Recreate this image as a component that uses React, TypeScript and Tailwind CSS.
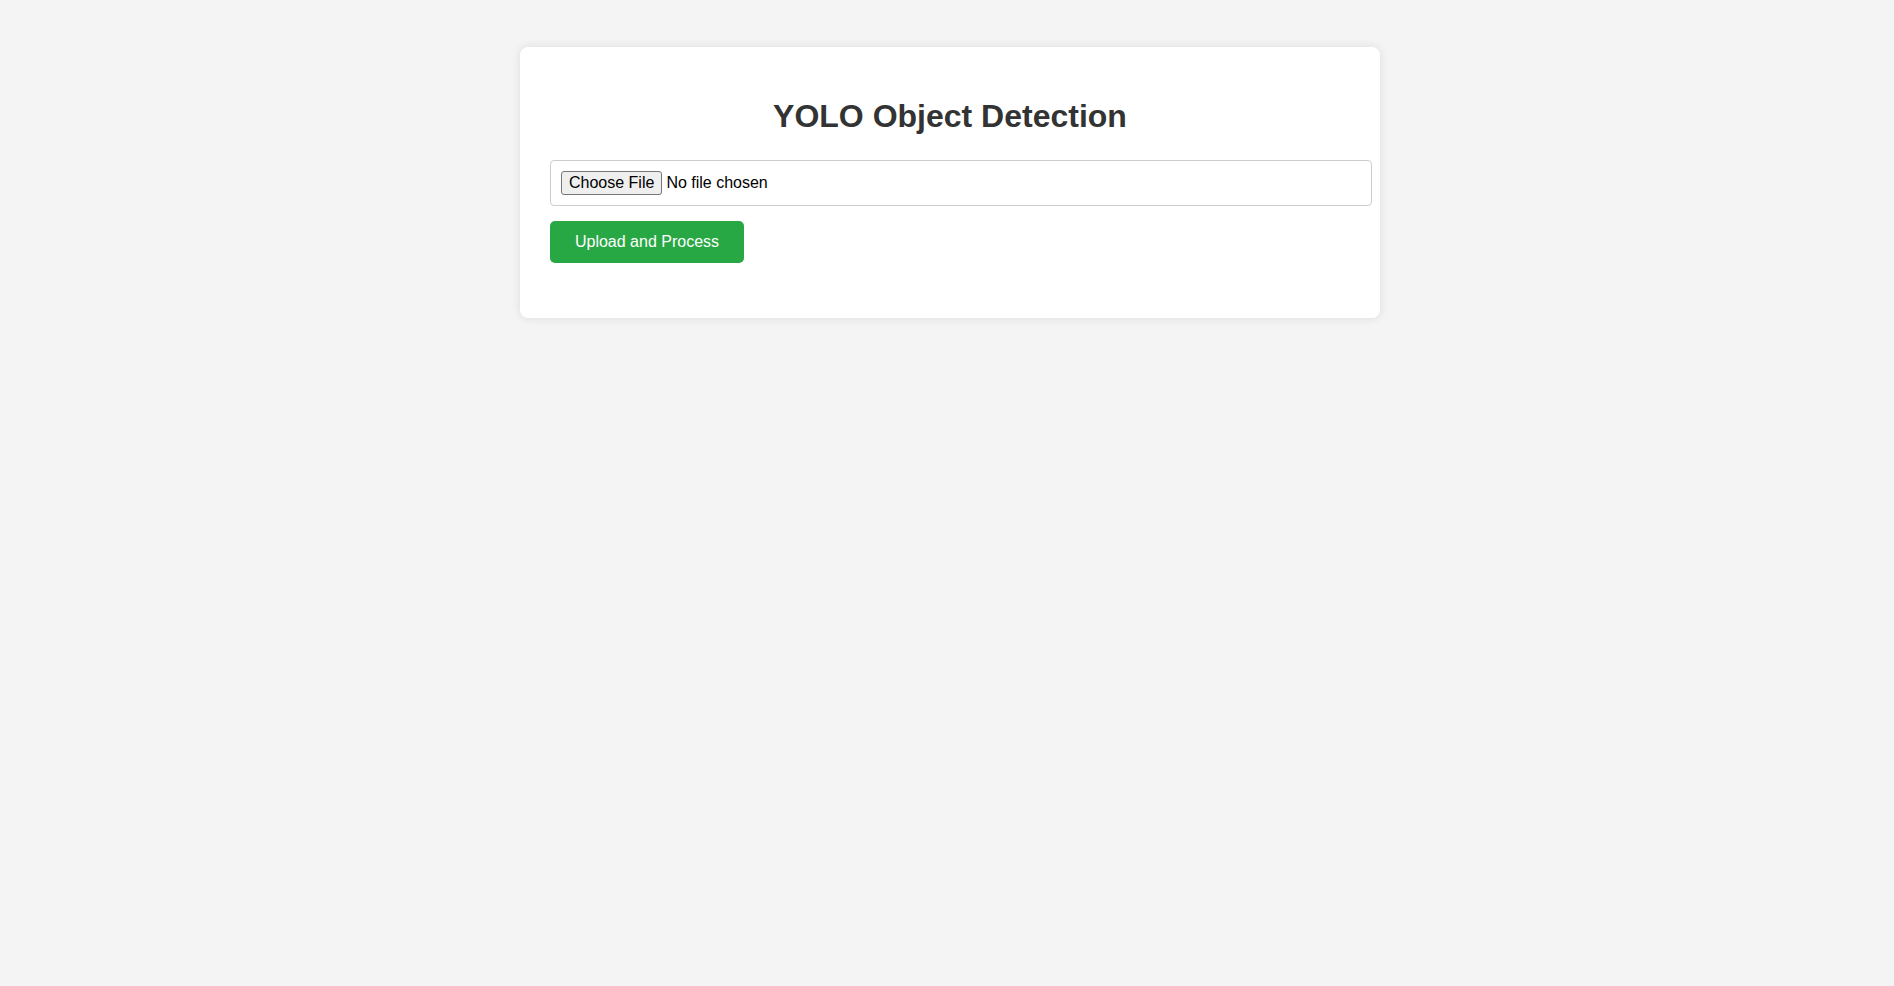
export default function App() {
  return (
    <div className="min-h-screen bg-[#f4f4f4] font-['Liberation_Sans',Arial,sans-serif] text-[#333]">
      <div className="flex justify-center pl-[6px] pt-[47px]">
        <div className="w-[860px] rounded-[8px] bg-white px-[30px] pt-[30px] pb-[55px] shadow-[0_0_10px_rgba(0,0,0,0.1)]">
          <h1 className="mt-[21px] mb-[25px] text-center text-[32px] leading-[37px] font-bold text-[#333]">
            YOLO Object Detection
          </h1>
          <form onSubmit={(e) => e.preventDefault()}>
            <input
              type="file"
              className="block h-[46px] w-[822px] rounded-[4px] border border-[#ccc] p-[10px] text-[16px] leading-[24px] text-black file:mr-[4px] file:h-[24px] file:rounded-[3px] file:border file:border-[#767676] file:bg-[#efefef] file:px-[7px] file:py-0 file:leading-[22px] file:text-black"
            />
            <button
              type="submit"
              className="mt-[15px] flex h-[42px] w-[194px] items-center justify-center rounded-[5px] bg-[#28a745] text-[16px] leading-[18px] text-white"
            >
              Upload and Process
            </button>
          </form>
        </div>
      </div>
    </div>
  );
}
